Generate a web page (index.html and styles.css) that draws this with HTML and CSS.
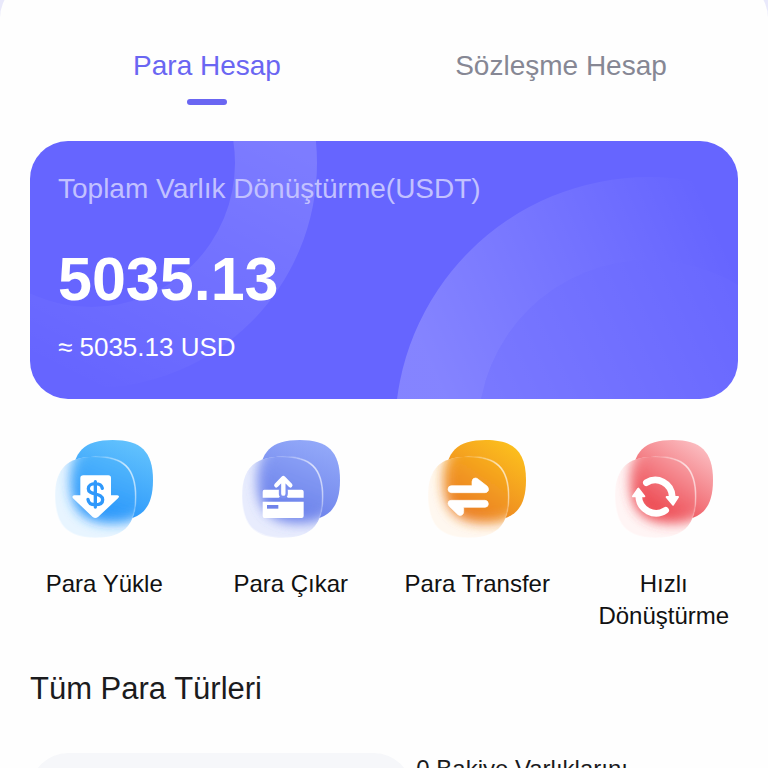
FILE: index.html
```
<!DOCTYPE html>
<html lang="tr">
  <head>
    <meta charset="UTF-8">
    <meta name="viewport" content="width=device-width, initial-scale=1">
    <title>Para Hesap</title>
    <link rel="stylesheet" href="styles.css">
  </head>
  <body>
    <!-- shapes shared by the action icons -->
    <svg class="defs" width="0" height="0" aria-hidden="true">
      <defs>
        <path id="tile" d="M121 0C205 0 242 34 242 121C242 207 205 243 121 243C37 243 0 207 0 121C0 34 37 0 121 0Z" />
        <clipPath id="frontClip"><use href="#tile" x="48" y="95" /></clipPath>
        <filter id="soft" x="-30%" y="-30%" width="160%" height="160%">
          <feGaussianBlur stdDeviation="19" />
        </filter>
        <linearGradient id="edge" x1="0.45" y1="0" x2="1" y2="0.8">
          <stop offset="0" stop-color="#fff" stop-opacity="0" />
          <stop offset="0.35" stop-color="#fff" stop-opacity="0.65" />
          <stop offset="0.65" stop-color="#fff" stop-opacity="0.5" />
          <stop offset="1" stop-color="#fff" stop-opacity="0" />
        </linearGradient>
        <linearGradient id="blue" x1="0.7" y1="0" x2="0.3" y2="1">
          <stop offset="0" stop-color="#62c2fd" />
          <stop offset="1" stop-color="#2492fb" />
        </linearGradient>
        <linearGradient id="indigo" x1="0.7" y1="0" x2="0.3" y2="1">
          <stop offset="0" stop-color="#93a9f9" />
          <stop offset="1" stop-color="#687de9" />
        </linearGradient>
        <linearGradient id="orange" x1="0.9" y1="0.1" x2="0.3" y2="1">
          <stop offset="0" stop-color="#fcbf1d" />
          <stop offset="1" stop-color="#ea7a22" />
        </linearGradient>
        <linearGradient id="red" x1="0.9" y1="0.1" x2="0.3" y2="1">
          <stop offset="0" stop-color="#fbbcc0" />
          <stop offset="1" stop-color="#ec3f48" />
        </linearGradient>
      </defs>
    </svg>

    <main class="sheet">
      <nav class="tabs">
        <a class="tab active" href="#para">Para Hesap</a>
        <a class="tab" href="#sozlesme">Sözleşme Hesap</a>
      </nav>

      <section class="balance">
        <svg class="balance-bg" viewBox="0 0 708 258" preserveAspectRatio="xMidYMid slice" aria-hidden="true">
          <defs>
            <linearGradient id="ringLeft" x1="0.8" y1="0.4" x2="0.5" y2="1">
              <stop offset="0" stop-color="#fff" stop-opacity="0.15" />
              <stop offset="1" stop-color="#fff" stop-opacity="0" />
            </linearGradient>
            <linearGradient id="ringRight" gradientUnits="userSpaceOnUse" x1="400" y1="220" x2="690" y2="90">
              <stop offset="0" stop-color="#fff" stop-opacity="0.2" />
              <stop offset="1" stop-color="#fff" stop-opacity="0" />
            </linearGradient>
            <linearGradient id="discRight" gradientUnits="userSpaceOnUse" x1="450" y1="258" x2="700" y2="140">
              <stop offset="0" stop-color="#fff" stop-opacity="0.13" />
              <stop offset="1" stop-color="#fff" stop-opacity="0.02" />
            </linearGradient>
          </defs>
          <path fill="url(#ringLeft)" fill-rule="evenodd" d="M-163 22a225 225 0 1 0 450 0a225 225 0 1 0 -450 0ZM-83 22a144 144 0 1 0 288 0a144 144 0 1 0 -288 0Z" />
          <path fill="url(#ringRight)" fill-rule="evenodd" d="M365 290a254 254 0 1 0 508 0a254 254 0 1 0 -508 0ZM448 290a171 171 0 1 0 342 0a171 171 0 1 0 -342 0Z" />
          <circle fill="url(#discRight)" cx="619" cy="290" r="171" />
        </svg>
        <p class="balance-label">Toplam Varlık Dönüştürme(USDT)</p>
        <p class="balance-total">5035.13</p>
        <p class="balance-usd">≈ 5035.13 USD</p>
      </section>

      <div class="actions">
        <button class="action" type="button">
          <svg class="action-icon" viewBox="0 0 390 390" aria-hidden="true">
            <use href="#tile" x="100" y="45" fill="url(#blue)" />
            <use href="#tile" x="48" y="95" fill="#e8f5ff" />
            <g clip-path="url(#frontClip)">
              <use href="#tile" x="100" y="45" fill="url(#blue)" filter="url(#soft)" />
              <use href="#tile" x="100" y="45" fill="url(#blue)" filter="url(#soft)" opacity="0.5" />
            </g>
            <use href="#tile" x="48" y="95" fill="none" stroke="url(#edge)" stroke-width="5" />
            <path fill="#fff" d="M133 151H208Q216 151 216 159V211H235Q244 213 237 220L177 276Q169 282 161 276L102 220Q97 212 106 211H124V159Q124 151 133 151Z" />
            <path fill="none" stroke="#2e98fb" stroke-width="10" stroke-linecap="round" d="M169 170V246M190 190C188 180 180 176 169 176C156 176 148 182 148 191C148 202 158 204 169 207C181 210 191 213 191 224C191 234 182 239 169 239C156 239 148 233 147 223" />
          </svg>
          <span>Para Yükle</span>
        </button>
        <button class="action" type="button">
          <svg class="action-icon" viewBox="0 0 390 390" aria-hidden="true">
            <use href="#tile" x="100" y="45" fill="url(#indigo)" />
            <use href="#tile" x="48" y="95" fill="#e8ecfd" />
            <g clip-path="url(#frontClip)">
              <use href="#tile" x="100" y="45" fill="url(#indigo)" filter="url(#soft)" />
              <use href="#tile" x="100" y="45" fill="url(#indigo)" filter="url(#soft)" opacity="0.5" />
            </g>
            <use href="#tile" x="48" y="95" fill="none" stroke="url(#edge)" stroke-width="5" />
            <path fill="#fff" d="M115 194H227Q233 194 233 200V218H186Q182 214 172 214Q162 214 158 218H110V200Q110 194 115 194ZM110 230H233V273Q233 279 227 279H115Q110 279 110 273Z" />
            <path fill="none" stroke="#7c90f1" stroke-width="27" stroke-linecap="round" d="M172 197V207" />
            <path fill="none" stroke="#fff" stroke-width="13" stroke-linecap="round" stroke-linejoin="round" d="M172 206V163M151 181L172 159L193 181" />
            <path fill="#7083ea" d="M123 240H157V251H123Z" />
          </svg>
          <span>Para Çıkar</span>
        </button>
        <button class="action" type="button">
          <svg class="action-icon" viewBox="0 0 390 390" aria-hidden="true">
            <use href="#tile" x="100" y="45" fill="url(#orange)" />
            <use href="#tile" x="48" y="95" fill="#fff8f0" />
            <g clip-path="url(#frontClip)">
              <use href="#tile" x="100" y="45" fill="url(#orange)" filter="url(#soft)" />
              <use href="#tile" x="100" y="45" fill="url(#orange)" filter="url(#soft)" opacity="0.5" />
            </g>
            <use href="#tile" x="48" y="95" fill="none" stroke="url(#edge)" stroke-width="5" />
            <path fill="#fff" stroke="#fff" stroke-width="2" d="M118 182H180V170Q181 159 190 159Q195 159 199 163L226 184Q231 190 229 197Q226 203 219 203H118Q108 202 108 193Q108 183 118 182ZM219 226H118Q108 226 108 236Q109 241 114 246L138 269Q147 275 153 267Q155 264 155 259V247H219Q229 246 229 237Q229 227 219 226Z" />
          </svg>
          <span>Para Transfer</span>
        </button>
        <button class="action" type="button">
          <svg class="action-icon" viewBox="0 0 390 390" aria-hidden="true">
            <use href="#tile" x="100" y="45" fill="url(#red)" />
            <use href="#tile" x="48" y="95" fill="#fff5f5" />
            <g clip-path="url(#frontClip)">
              <use href="#tile" x="100" y="45" fill="url(#red)" filter="url(#soft)" />
              <use href="#tile" x="100" y="45" fill="url(#red)" filter="url(#soft)" opacity="0.5" />
            </g>
            <use href="#tile" x="48" y="95" fill="none" stroke="url(#edge)" stroke-width="5" />
            <path fill="none" stroke="#fff" stroke-width="20" stroke-linecap="round" d="M142 173C174 153 218 173 220 216M200 256C166 279 120 255 119 212" />
            <path fill="#fff" stroke="#fff" stroke-width="6" stroke-linejoin="round" d="M203 216H237L222 239ZM102 214H136L118 191Z" />
          </svg>
          <span>Hızlı Dönüştürme</span>
        </button>
      </div>

      <h2 class="section-title">Tüm Para Türleri</h2>

      <div class="filter">
        <input class="search" type="search" aria-label="Para ara">
        <p class="filter-text">0 Bakiye Varlıklarını</p>
      </div>
    </main>
  </body>
</html>
```
FILE: styles.css
```
* {
  box-sizing: border-box;
}

body {
  margin: 0;
  height: 100vh;
  overflow: hidden;
  background-color: #e9e9fb;
  font-family: "Liberation Sans", Arial, sans-serif;
  color: #1b1b1d;
}

.defs {
  position: absolute;
}

.sheet {
  margin-top: -20px;
  padding: 20px 0 40px;
  border-radius: 38px 38px 0 0;
  background-color: #fefefe;
}

.tabs {
  display: grid;
  grid-template-columns: 1fr 1fr;
  padding: 50px 30px 0;
}

.tab {
  display: flex;
  flex-direction: column;
  align-items: center;
  gap: 17px;
  font-size: 28px;
  line-height: 32px;
  color: #868794;
  text-decoration: none;
}

.tab.active {
  color: #6a66f2;
}

.tab::after {
  content: "";
  width: 40px;
  height: 6px;
  border-radius: 3px;
}

.tab.active::after {
  background-color: #6a66f2;
}

.balance {
  position: relative;
  overflow: hidden;
  margin: 36px 30px 0;
  padding: 32px 28px 36px;
  border-radius: 38px;
  background-color: #6665ff;
  color: #fff;
}

.balance-bg {
  position: absolute;
  inset: 0;
  width: 100%;
  height: 100%;
}

.balance p {
  position: relative;
  margin: 0;
}

.balance-label {
  font-size: 28px;
  line-height: 32px;
  color: #c2c1ff;
}

.balance .balance-total {
  margin: 42px 0 20px;
  font-size: 61px;
  font-weight: bold;
  line-height: 64px;
}

.balance-usd {
  font-size: 26px;
  line-height: 32px;
}

.actions {
  display: grid;
  grid-template-columns: repeat(4, 1fr);
  align-items: start;
  padding: 26px 11px 0;
}

.action {
  display: flex;
  flex-direction: column;
  align-items: center;
  gap: 13px;
  padding: 0 12px;
  border: none;
  background: none;
  font-family: inherit;
  font-size: 24px;
  line-height: 32px;
  color: #111;
  cursor: pointer;
}

.action-icon {
  width: 130px;
  height: 130px;
}

.section-title {
  margin: 39px 30px 0;
  font-size: 31px;
  font-weight: normal;
  line-height: 36px;
}

.filter {
  display: flex;
  align-items: flex-start;
  gap: 4px;
  padding: 46px 30px 0;
}

.search {
  width: 54%;
  height: 76px;
  padding: 0 38px;
  border: none;
  border-radius: 38px;
  background-color: #f6f7fa;
  font-family: inherit;
  font-size: 24px;
}

.filter-text {
  margin: 0;
  font-size: 24px;
  line-height: 32px;
}
```
